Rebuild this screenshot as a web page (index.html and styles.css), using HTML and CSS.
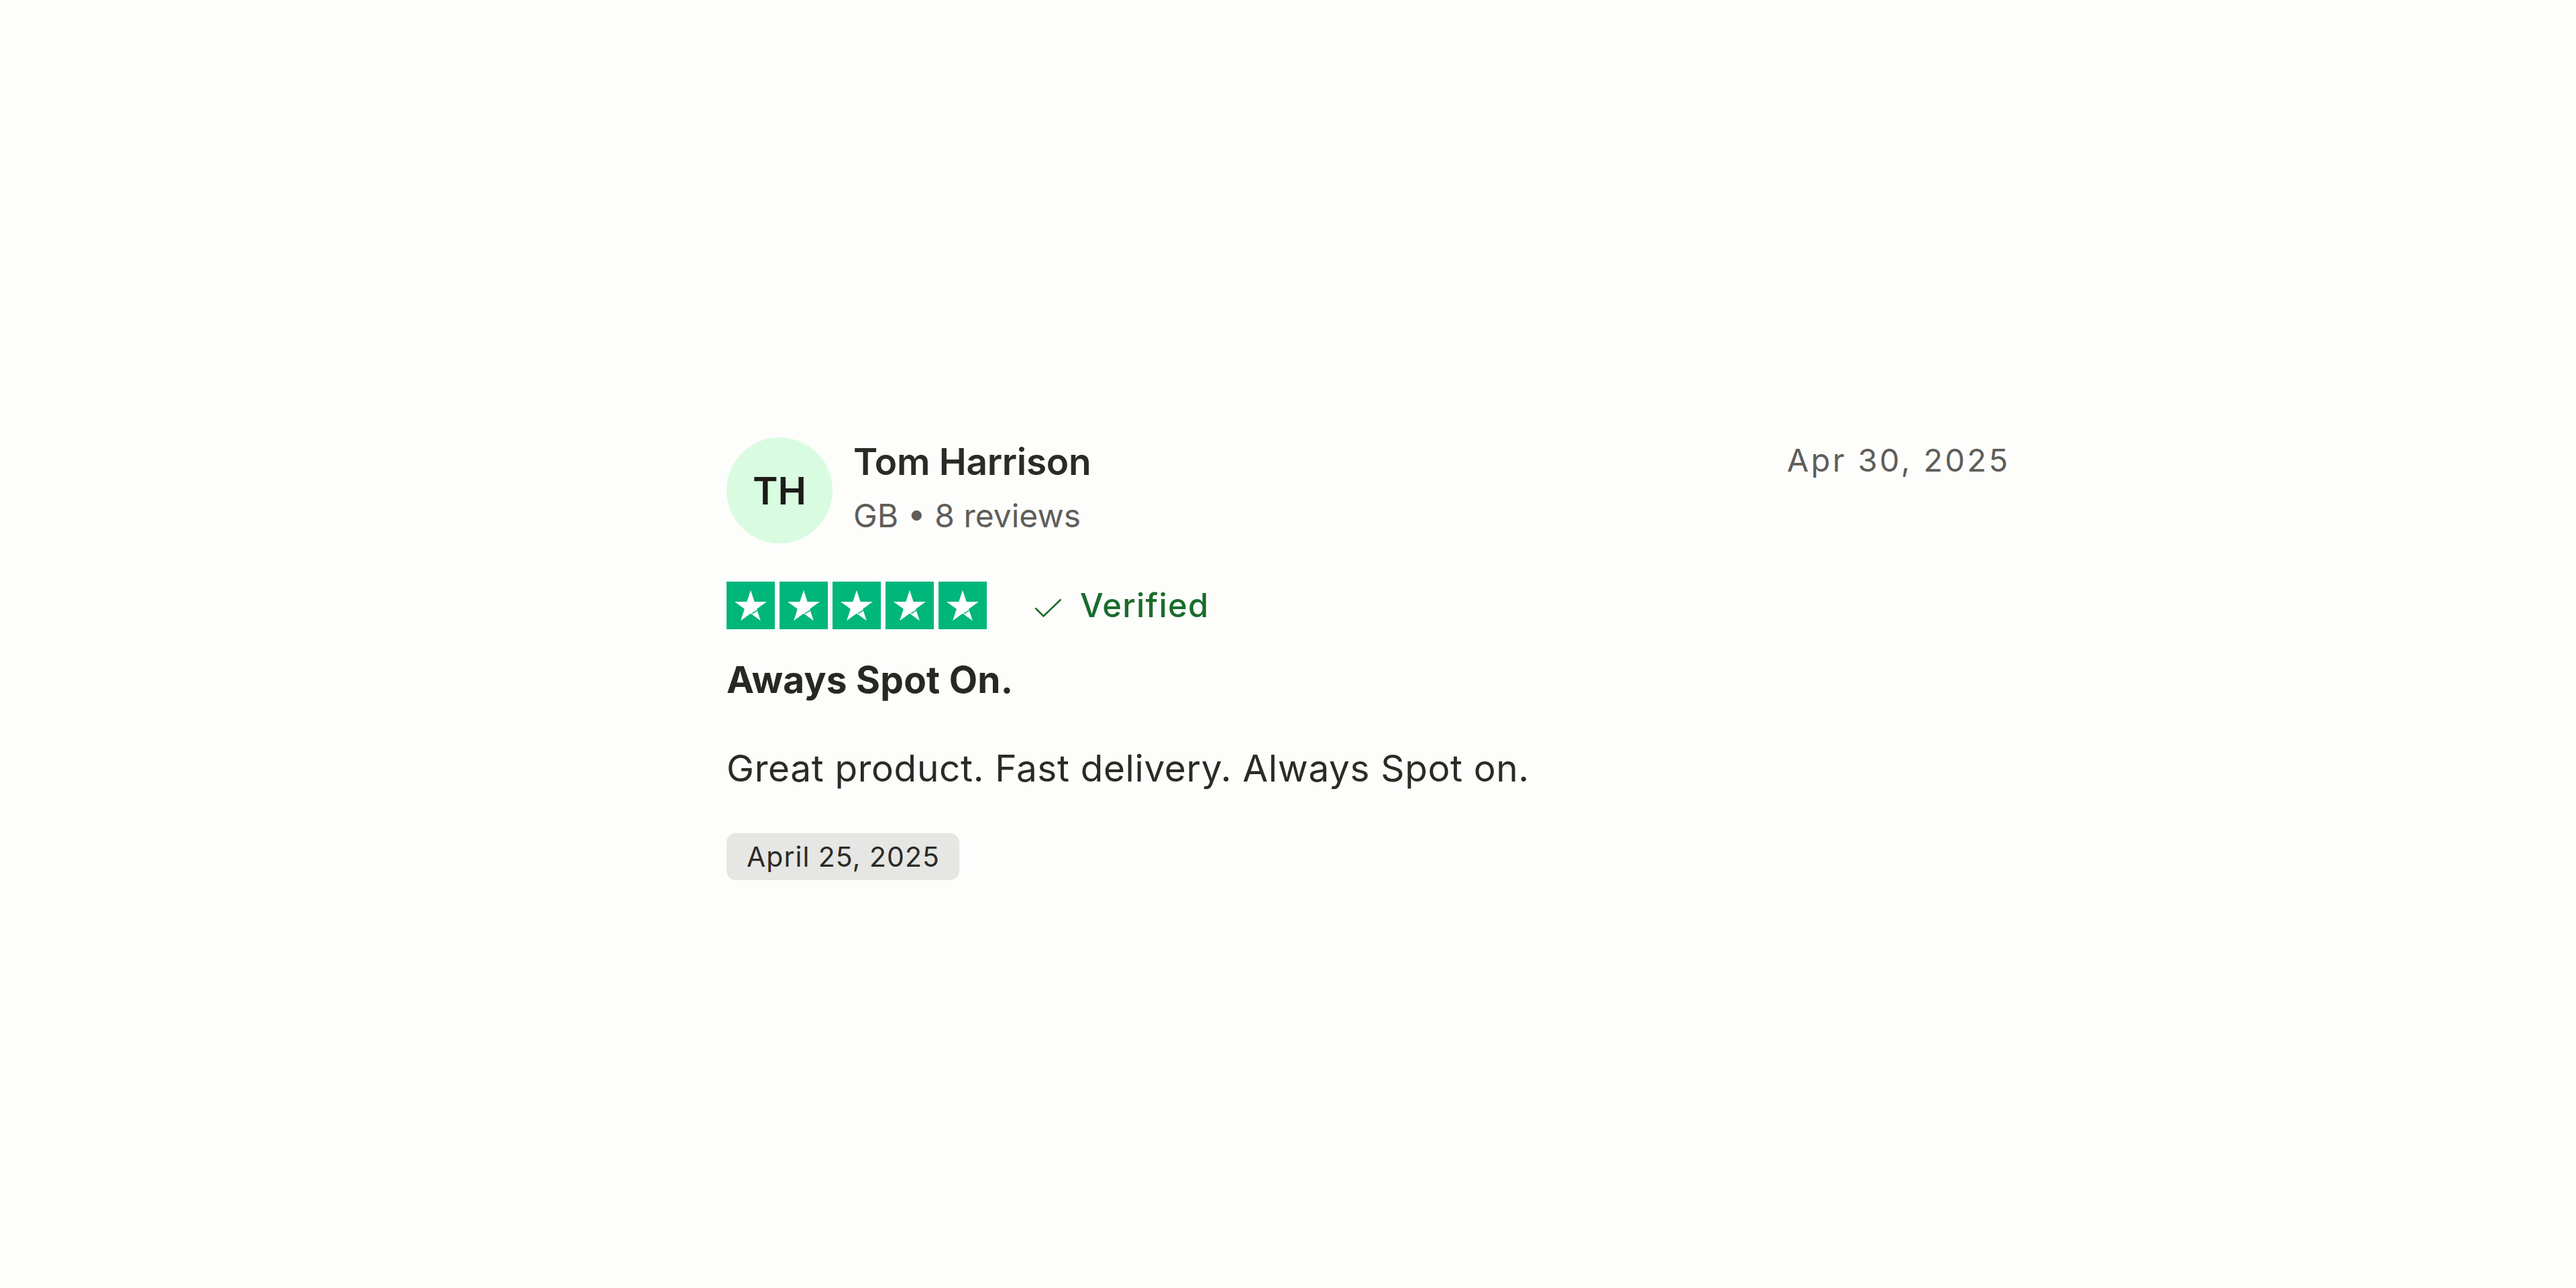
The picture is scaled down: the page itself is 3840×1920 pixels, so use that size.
FILE: index.html
```html
<!DOCTYPE html>
<html lang="en">
<head>
<meta charset="utf-8">
<title>Review</title>
<link rel="stylesheet" href="styles.css">
</head>
<body>
<main class="page">
  <article class="review">
    <header class="review-head">
      <div class="avatar">TH</div>
      <div class="who">
        <div class="name">Tom Harrison</div>
        <div class="meta">GB • 8 reviews</div>
      </div>
      <time class="posted">Apr 30, 2025</time>
    </header>
    <div class="rating-row">
      <div class="stars">
        <span class="star"><svg viewBox="0 0 24 24"><polygon points="12,4.3 13.91,10.17 20.08,10.17 15.09,13.8 17,19.68 12,16.05 7,19.68 8.91,13.8 3.92,10.17 10.09,10.17" fill="#fff"/><line x1="12.7" y1="16.1" x2="15.3" y2="14.5" stroke="#00b67a" stroke-width="0.55"/></svg></span>
        <span class="star"><svg viewBox="0 0 24 24"><polygon points="12,4.3 13.91,10.17 20.08,10.17 15.09,13.8 17,19.68 12,16.05 7,19.68 8.91,13.8 3.92,10.17 10.09,10.17" fill="#fff"/><line x1="12.7" y1="16.1" x2="15.3" y2="14.5" stroke="#00b67a" stroke-width="0.55"/></svg></span>
        <span class="star"><svg viewBox="0 0 24 24"><polygon points="12,4.3 13.91,10.17 20.08,10.17 15.09,13.8 17,19.68 12,16.05 7,19.68 8.91,13.8 3.92,10.17 10.09,10.17" fill="#fff"/><line x1="12.7" y1="16.1" x2="15.3" y2="14.5" stroke="#00b67a" stroke-width="0.55"/></svg></span>
        <span class="star"><svg viewBox="0 0 24 24"><polygon points="12,4.3 13.91,10.17 20.08,10.17 15.09,13.8 17,19.68 12,16.05 7,19.68 8.91,13.8 3.92,10.17 10.09,10.17" fill="#fff"/><line x1="12.7" y1="16.1" x2="15.3" y2="14.5" stroke="#00b67a" stroke-width="0.55"/></svg></span>
        <span class="star"><svg viewBox="0 0 24 24"><polygon points="12,4.3 13.91,10.17 20.08,10.17 15.09,13.8 17,19.68 12,16.05 7,19.68 8.91,13.8 3.92,10.17 10.09,10.17" fill="#fff"/><line x1="12.7" y1="16.1" x2="15.3" y2="14.5" stroke="#00b67a" stroke-width="0.55"/></svg></span>
      </div>
      <div class="verified">
        <svg class="check" viewBox="0 0 41 28"><polyline points="1.5,14.5 13.5,26.5 39.5,1.5" fill="none" stroke="currentColor" stroke-width="2.6"/></svg>
        <span>Verified</span>
      </div>
    </div>
    <h2 class="title">Aways Spot On.</h2>
    <p class="body">Great product. Fast delivery. Always Spot on.</p>
    <div class="exp-date">April 25, 2025</div>
  </article>
</main>
</body>
</html>
```
FILE: styles.css
```css
html, body {
  margin: 0;
  padding: 0;
  background: #fdfdfc;
}
body {
  font-family: Inter, "Liberation Sans", Arial, sans-serif;
  color: #2a2a27;
}
.page {
  padding: 652px 0 0 1083px;
}
.review {
  width: 1910px;
}
.review-head {
  display: flex;
  align-items: flex-start;
}
.avatar {
  width: 158px;
  height: 158px;
  border-radius: 50%;
  background: #d9fce1;
  display: flex;
  align-items: center;
  justify-content: center;
  font-size: 57px;
  font-weight: 600;
  color: #1c1c1a;
  flex: none;
}
.who {
  margin-left: 31px;
  margin-top: 3px;
  flex: 1;
}
.name {
  font-size: 55px;
  line-height: 66px;
  font-weight: 600;
  color: #2a2a27;
  letter-spacing: -0.3px;
}
.meta {
  margin-top: 18px;
  font-size: 48px;
  line-height: 60px;
  color: #5f5d58;
}
.posted {
  margin-top: 4px;
  font-size: 47px;
  line-height: 60px;
  color: #5f5d58;
  letter-spacing: 3.4px;
  margin-right: -3.4px;
}
.rating-row {
  display: flex;
  align-items: center;
  margin-top: 57px;
}
.stars {
  display: flex;
  gap: 7px;
}
.star {
  width: 72px;
  height: 71px;
  background: #00b67a;
  display: block;
}
.star svg {
  display: block;
  width: 72px;
  height: 71px;
}
.verified {
  display: flex;
  align-items: center;
  margin-left: 71px;
  color: #1b6c2b;
  font-size: 49px;
  line-height: 60px;
  font-weight: 500;
  letter-spacing: 1.2px;
}
.check {
  width: 41px;
  height: 28px;
  margin-right: 27px;
  margin-top: 6px;
}
.title {
  margin: 42px 0 0;
  font-size: 55px;
  line-height: 66px;
  font-weight: 650;
  color: #272724;
  letter-spacing: 0.2px;
}
.body {
  margin: 66px 0 0;
  font-size: 55px;
  line-height: 66px;
  font-weight: 400;
  color: #2a2a27;
  letter-spacing: 0.6px;
}
.exp-date {
  display: inline-block;
  margin-top: 64px;
  padding: 10px 29px 10px 30px;
  font-size: 41px;
  line-height: 50px;
  background: #e6e6e4;
  border-radius: 14px;
  color: #2a2a27;
  letter-spacing: 1px;
}
```
